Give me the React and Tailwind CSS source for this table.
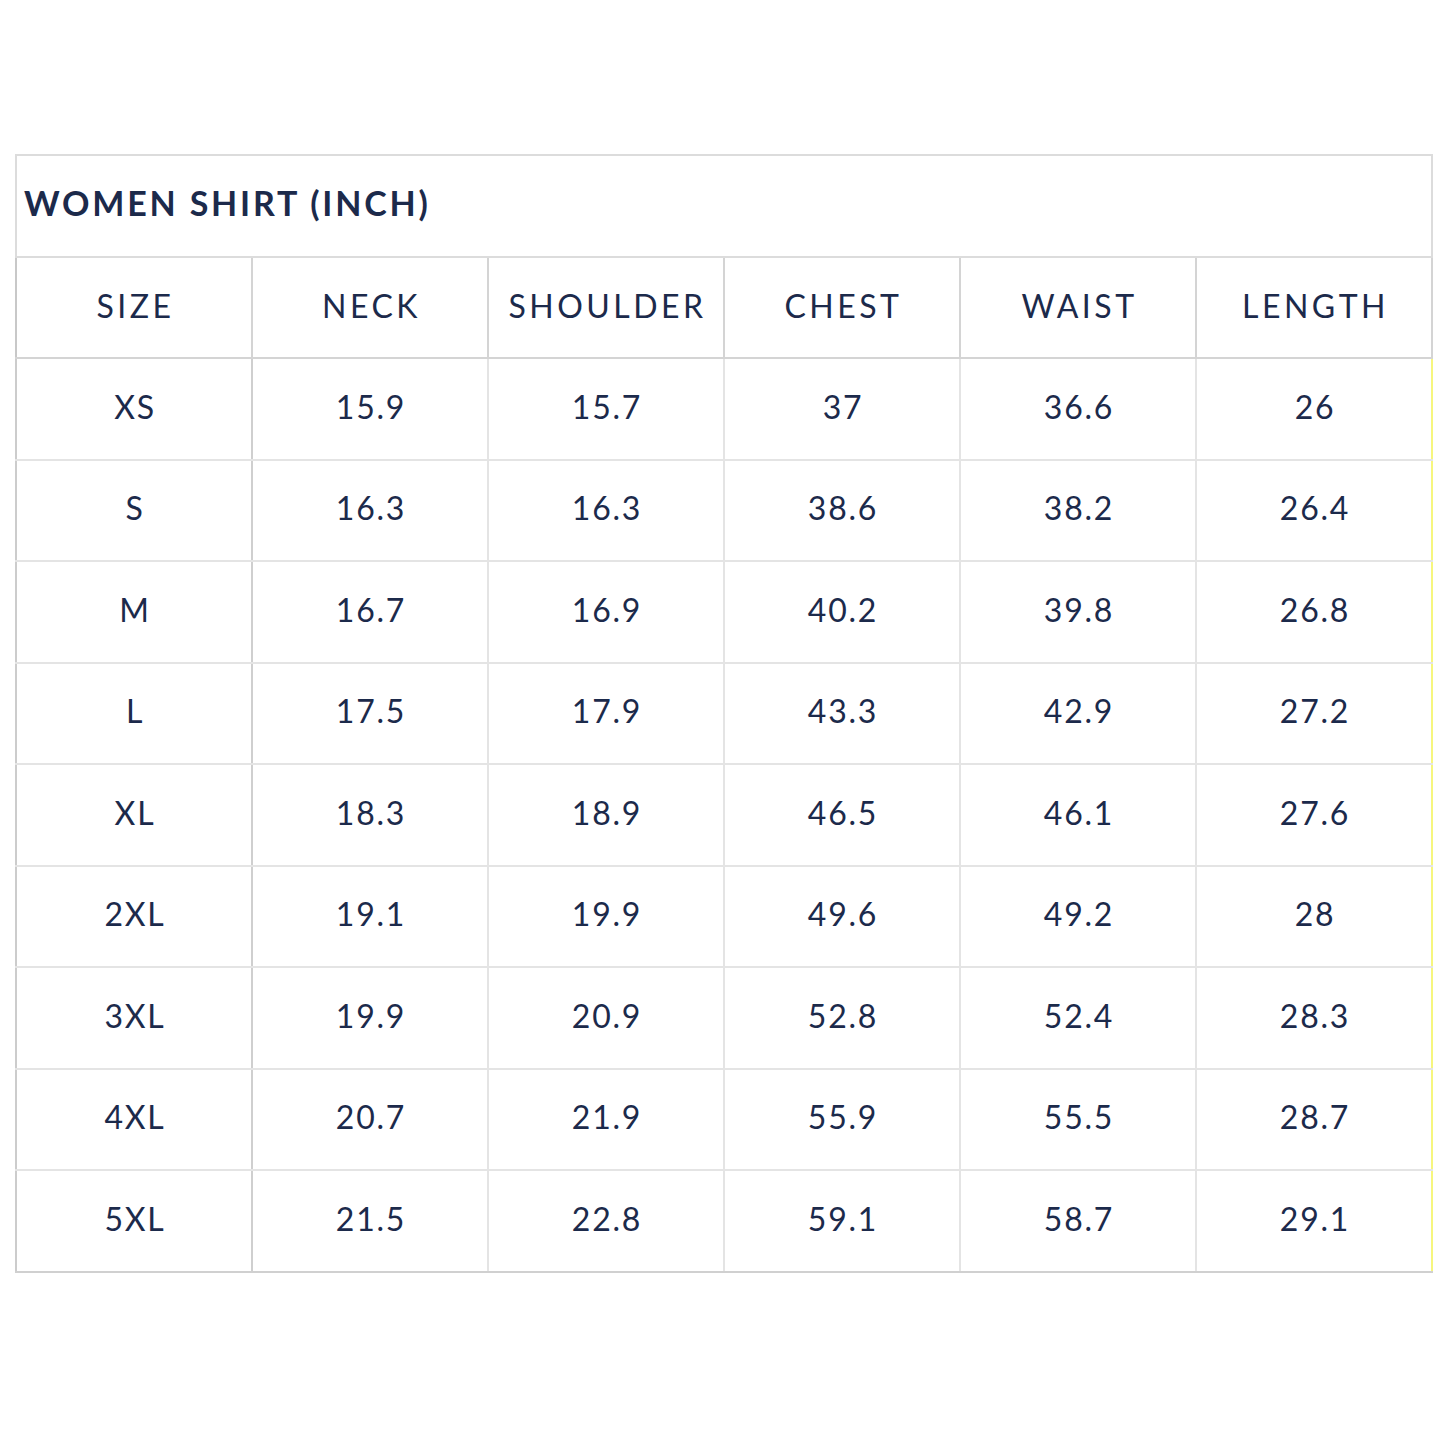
import React from "react";

const headers = ["SIZE", "NECK", "SHOULDER", "CHEST", "WAIST", "LENGTH"];
const rows = [
  ["XS", "15.9", "15.7", "37", "36.6", "26"],
  ["S", "16.3", "16.3", "38.6", "38.2", "26.4"],
  ["M", "16.7", "16.9", "40.2", "39.8", "26.8"],
  ["L", "17.5", "17.9", "43.3", "42.9", "27.2"],
  ["XL", "18.3", "18.9", "46.5", "46.1", "27.6"],
  ["2XL", "19.1", "19.9", "49.6", "49.2", "28"],
  ["3XL", "19.9", "20.9", "52.8", "52.4", "28.3"],
  ["4XL", "20.7", "21.9", "55.9", "55.5", "28.7"],
  ["5XL", "21.5", "22.8", "59.1", "58.7", "29.1"],
];

export default function App() {
  return (
    <div className="w-[1445px] h-[1445px] bg-white pt-[154px] pl-[15px] text-[#1c2a4b]" style={{ fontFamily: "Lato, 'Open Sans', sans-serif" }}>
      <table className="w-[1418px] border-collapse table-fixed">
        <thead>
          <tr className="h-[102px]">
            <th colSpan={6} className="border-2 border-[#dcdcdc] text-left pl-[7px] pb-[8px] text-[34px] font-bold tracking-[2.8px] align-middle">
              WOMEN SHIRT (INCH)
            </th>
          </tr>
          <tr className="h-[101px]">
            {headers.map((h, i) => (
              <th key={h} className={`border-2 border-[#d4d4d4] ${i === 0 ? "border-l-[#c8c8c8]" : ""} text-center text-[32px] font-normal tracking-[3.5px] pl-[3px] pb-[4px] align-middle`}>
                {h}
              </th>
            ))}
          </tr>
        </thead>
        <tbody>
          {rows.map((r, ri) => (
            <tr key={ri} className="h-[101.5px]">
              {r.map((c, ci) => (
                <td
                  key={ci}
                  className={`border-2 border-[#e4e4e4] ${ci === 0 ? "border-l-[#cccccc] border-r-[#cfcfcf]" : ""} ${ci === 5 ? "border-r-[#f6f67e]" : ""} ${ri === rows.length - 1 ? "border-b-[#d0d0d0]" : ""} text-center text-[32px] tracking-[1.8px] pl-[2px] pb-[4px] align-middle`}
                >
                  {c}
                </td>
              ))}
            </tr>
          ))}
        </tbody>
      </table>
    </div>
  );
}
